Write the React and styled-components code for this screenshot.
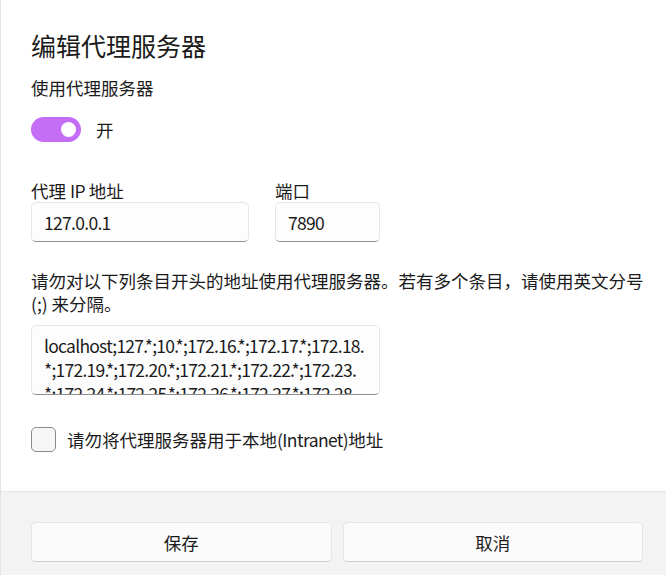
import React, { useState } from 'react'
import styled, { createGlobalStyle } from 'styled-components'

const GlobalStyle = createGlobalStyle`
  html, body {
    margin: 0;
    padding: 0;
    background: #ffffff;
    overflow: hidden;
  }
  body {
    font-family: "Segoe UI", "Noto Sans CJK SC", sans-serif;
    color: #1b1b1b;
  }
`

const Dialog = styled.div`
  width: 666px;
  height: 575px;
  box-sizing: border-box;
  border-left: 1px solid #e3e0e8;
  display: flex;
  flex-direction: column;
  background: #ffffff;
`

const Body = styled.div`
  flex: 0 0 491px;
  box-sizing: border-box;
  padding: 27px 30px 0 30px;
  display: flex;
  flex-direction: column;
`

const Title = styled.h1`
  margin: 0;
  font-size: 25px;
  line-height: 36px;
  font-weight: 400;
  color: #1a1a1a;
`

const Label = styled.div`
  font-size: 17.5px;
  line-height: ${p => p.lh || 22}px;
  margin-top: ${p => p.mt || 0}px;
  color: #1b1b1b;
`

const Latin = styled.span`
  letter-spacing: -0.6px;
`

const ToggleRow = styled.label`
  display: flex;
  align-items: center;
  gap: 15px;
  margin-top: 17px;
  font-size: 17.5px;
  cursor: pointer;
`

const Track = styled.span`
  position: relative;
  width: 50px;
  height: 25px;
  border-radius: 13px;
  box-sizing: border-box;
  background: ${p => (p.on ? '#c46ef5' : '#ffffff')};
  border: ${p => (p.on ? 'none' : '1px solid #868686')};
`

const Knob = styled.span`
  position: absolute;
  top: 5px;
  left: ${p => (p.on ? '30px' : '5px')};
  width: 15px;
  height: 15px;
  border-radius: 50%;
  background: ${p => (p.on ? '#ffffff' : '#5c5c5c')};
`

const FieldRow = styled.div`
  display: flex;
  gap: 26px;
  margin-top: 38px;
`

const Field = styled.div`
  display: flex;
  flex-direction: column;
  width: ${p => p.w}px;
`

const Input = styled.input`
  box-sizing: border-box;
  width: 100%;
  height: 40px;
  margin: 0;
  padding: 0 12px;
  font: inherit;
  font-size: 17.5px;
  letter-spacing: -0.7px;
  color: #1b1b1b;
  background: #fdfdfd;
  border: 1px solid #e6e6e6;
  border-bottom-color: #8f8f8f;
  border-radius: 5px;
  outline: none;
`

const Para = styled.p`
  margin: 27px 0 0 0;
  font-size: 17.5px;
  line-height: 23px;
  color: #1b1b1b;
  white-space: nowrap;
`

const TextBox = styled.div`
  box-sizing: border-box;
  margin-top: 10px;
  width: 349px;
  height: 70px;
  padding: 8px 0 0 12px;
  background: #fdfdfd;
  border: 1px solid #e6e6e6;
  border-bottom-color: #8f8f8f;
  border-radius: 5px;
  overflow: hidden;
  font-size: 17.5px;
  line-height: 24px;
  letter-spacing: -0.75px;
  white-space: nowrap;
`

const CheckRow = styled.label`
  display: flex;
  align-items: center;
  gap: 11px;
  margin-top: 32px;
  font-size: 17.5px;
  cursor: pointer;
`

const Box = styled.span`
  box-sizing: border-box;
  width: 25px;
  height: 25px;
  border: 1px solid #8a8a8a;
  border-radius: 5px;
  background: #f6f6f6;
`

const Footer = styled.div`
  flex: 1;
  box-sizing: border-box;
  border-top: 1px solid #e5e5e5;
  background: #f3f3f3;
  padding: 30px 23px 0 30px;
  display: flex;
  gap: 11px;
  align-items: flex-start;
`

const Button = styled.button`
  flex: 1;
  height: 40px;
  box-sizing: border-box;
  font: inherit;
  font-size: 17.5px;
  color: #1b1b1b;
  background: #fbfbfb;
  border: 1px solid #e5e5e5;
  border-bottom-color: #cfcfcf;
  border-radius: 5px;
  cursor: pointer;
`

const bypass = [
  'localhost;127.*;10.*;172.16.*;172.17.*;172.18.',
  '*;172.19.*;172.20.*;172.21.*;172.22.*;172.23.',
  '*;172.24.*;172.25.*;172.26.*;172.27.*;172.28.',
]

export default function App() {
  const [on, setOn] = useState(true)
  const [local, setLocal] = useState(false)

  return (
    <Dialog>
      <GlobalStyle />
      <Body>
        <Title>编辑代理服务器</Title>
        <Label lh={24} mt={13}>使用代理服务器</Label>
        <ToggleRow onClick={() => setOn(v => !v)}>
          <Track on={on}>
            <Knob on={on} />
          </Track>
          {on ? '开' : '关'}
        </ToggleRow>

        <FieldRow>
          <Field w={218}>
            <Label>代理 <Latin>IP</Latin> 地址</Label>
            <Input defaultValue="127.0.0.1" />
          </Field>
          <Field w={105}>
            <Label>端口</Label>
            <Input defaultValue="7890" />
          </Field>
        </FieldRow>

        <Para>
          请勿对以下列条目开头的地址使用代理服务器。若有多个条目，请使用英文分号
          <br />
          (;) 来分隔。
        </Para>
        <TextBox>
          {bypass.map(line => (
            <div key={line}>{line}</div>
          ))}
        </TextBox>

        <CheckRow onClick={() => setLocal(v => !v)}>
          <Box />
          <span>
            请勿将代理服务器用于本地<Latin>(Intranet)</Latin>地址
          </span>
        </CheckRow>
      </Body>
      <Footer>
        <Button>保存</Button>
        <Button>取消</Button>
      </Footer>
    </Dialog>
  )
}
